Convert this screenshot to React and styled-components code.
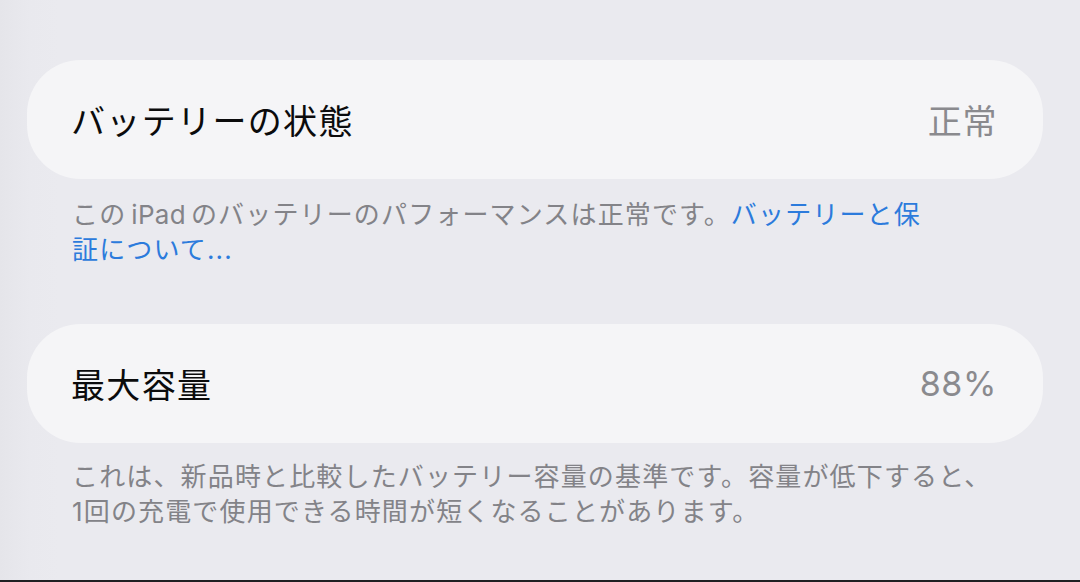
import React from "react";
import styled, { createGlobalStyle } from "styled-components";

const GlobalStyle = createGlobalStyle`
  html, body {
    margin: 0;
    padding: 0;
    background: #eaeaef;
  }
  body {
    font-family: "Inter", "Noto Sans CJK JP", sans-serif;
    -webkit-font-smoothing: antialiased;
  }
`;

const Page = styled.div`
  box-sizing: border-box;
  height: 582px;
  overflow: hidden;
  padding: 60px 37px 0 27px;
  background: linear-gradient(to right, #e5e5ea 0, #e9e9ee 30px, #eaeaef 60px);
  border-bottom: 2px solid #1f1f22;
`;

const Section = styled.section`
  display: flex;
  flex-direction: column;
  margin-bottom: ${(p) => p.gap || 0}px;
`;

const Card = styled.div`
  display: flex;
  align-items: center;
  justify-content: space-between;
  height: 119px;
  padding: 0 46px 0 44px;
  background: #f5f5f7;
  border-radius: 54px;
`;

const Label = styled.span`
  font-size: 34px;
  letter-spacing: 1.35px;
  color: #0b0b0c;
  font-weight: 400;
`;

const Value = styled.span`
  font-size: 34px;
  letter-spacing: 0.6px;
  color: #8a8a8e;
  font-weight: 400;
`;

const Caption = styled.p`
  margin: 0;
  padding: ${(p) => p.top}px 0 0 45px;
  font-size: 26px;
  line-height: 35px;
  letter-spacing: 1.15px;
  color: #838388;
`;

const Latin = styled.span`
  margin: 0 5px;
  letter-spacing: 0.3px;
`;

const Link = styled.a`
  color: #2c7bdc;
  text-decoration: none;
  cursor: pointer;
`;

export default function App() {
  return (
    <>
      <GlobalStyle />
      <Page>
        <Section gap={57}>
          <Card>
            <Label>バッテリーの状態</Label>
            <Value>正常</Value>
          </Card>
          <Caption top={18}>
            この<Latin>iPad</Latin>のバッテリーのパフォーマンスは正常です。
            <Link>
              バッテリーと保
              <br />
              証について...
            </Link>
          </Caption>
        </Section>
        <Section>
          <Card>
            <Label>最大容量</Label>
            <Value>88%</Value>
          </Card>
          <Caption top={16}>
            これは、新品時と比較したバッテリー容量の基準です。容量が低下すると、
            <br />
            1回の充電で使用できる時間が短くなることがあります。
          </Caption>
        </Section>
      </Page>
    </>
  );
}
